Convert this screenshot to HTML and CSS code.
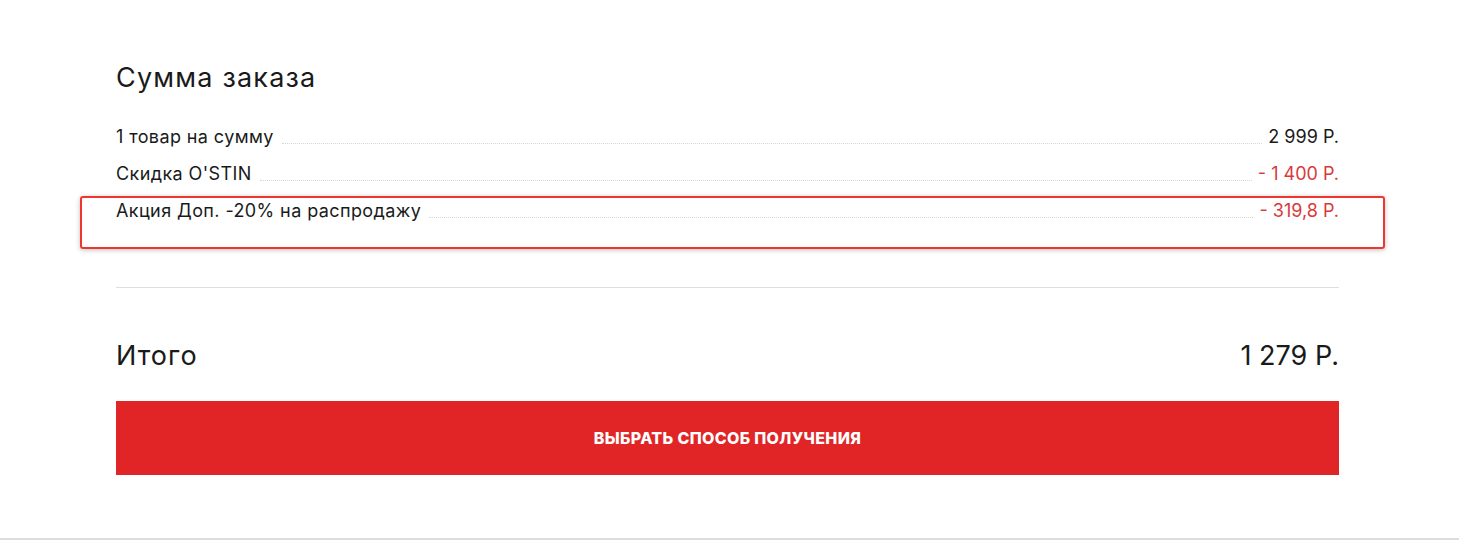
FILE: index.html
```html
<!DOCTYPE html>
<html lang="ru">
<head>
<meta charset="utf-8">
<link rel="stylesheet" href="styles.css">
</head>
<body>
<div class="page">
  <section class="summary">
    <h2 class="title">Сумма заказа</h2>
    <div class="rows">
      <div class="row"><span class="label">1 товар на сумму</span><span class="dots"></span><span class="value">2 999 Р.</span></div>
      <div class="row"><span class="label">Скидка O'STIN</span><span class="dots"></span><span class="value red">- 1 400 Р.</span></div>
      <div class="row highlighted"><span class="label">Акция Доп. -20% на распродажу</span><span class="dots"></span><span class="value red">- 319,8 Р.</span><span class="mark"></span></div>
    </div>
    <hr class="sep">
    <div class="total"><span class="total-label">Итого</span><span>1 279 Р.</span></div>
    <button class="btn">Выбрать способ получения</button>
  </section>
</div>
</body>
</html>
```
FILE: styles.css
```css
html, body { margin: 0; background: #fff; }
body { font-family: Inter, "Noto Sans", sans-serif; color: #1a1a1a; }
.page { height: 538px; border-bottom: 2px solid #dcdcdc; }
.summary { width: 1223px; margin-left: 116px; padding-top: 60px; }
.title { margin: 0; font-size: 27px; font-weight: 400; line-height: 36px; letter-spacing: 1.2px; }
.rows { margin-top: 30px; display: flex; flex-direction: column; }
.row { position: relative; display: flex; align-items: baseline; height: 37px; font-size: 18px; line-height: 22px; }
.label { flex: none; letter-spacing: 0.4px; }
.dots { flex: 1; border-bottom: 1px dotted #d6d6d6; margin: 0 6px 0 8px; transform: translateY(1px); }
.value { flex: none; }
.red { color: #d8393b; }
.mark { position: absolute; left: -36px; right: -46px; top: -4px; height: 49px; border: 2px solid #f0352f; border-radius: 3px; box-shadow: 0 1px 5px rgba(0,0,0,0.25); pointer-events: none; }
.sep { margin: 50px 0 0; border: 0; border-top: 1px solid #dedede; }
.total { display: flex; justify-content: space-between; margin-top: 50px; font-size: 27px; line-height: 36px; }
.total-label { letter-spacing: 1px; }
.btn { display: block; width: 100%; height: 74px; margin-top: 27px; background: #e12526; color: #fff; border: 0; font-family: Inter, sans-serif; font-weight: 800; font-size: 16px; text-transform: uppercase; letter-spacing: 0.35px; }
```
